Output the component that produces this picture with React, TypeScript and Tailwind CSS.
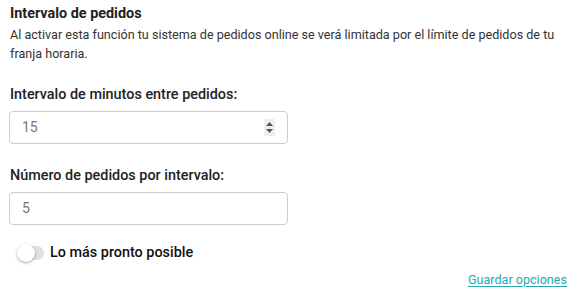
import React from "react";

export default function App() {
  return (
    <div
      className="w-[581px] h-[301px] bg-white text-[#212121] px-[10px] pt-[4px]"
      style={{ fontFamily: "Roboto, 'Liberation Sans', sans-serif" }}
    >
      <h2 className="text-[14.4px] font-bold leading-[20px]">Intervalo de pedidos</h2>
      <p className="text-[12.6px] leading-[19px] text-[#333] mt-[1px] w-[560px]">
        Al activar esta función tu sistema de pedidos online se verá limitada por el límite de pedidos de tu franja horaria.
      </p>
      <div className="mt-[22px]">
        <label className="block text-[14.4px] font-medium leading-[20px] text-[#222]">
          Intervalo de minutos entre pedidos:
        </label>
        <div className="mt-[6px] w-[279px] h-[33px] -ml-[1px] border border-[#ccc] rounded-[4px] flex items-center pl-[12px] pr-[12px]">
          <span className="text-[14px] text-[#777] flex-1">15</span>
          <div className="w-[11px] h-[17px] bg-[#efefef] flex flex-col items-center justify-center gap-[3px]">
            <svg width="7" height="4" viewBox="0 0 7 4"><path d="M0 4 L3.5 0 L7 4 Z" fill="#555" /></svg>
            <svg width="7" height="4" viewBox="0 0 7 4"><path d="M0 0 L3.5 4 L7 0 Z" fill="#555" /></svg>
          </div>
        </div>
      </div>
      <div className="mt-[22px]">
        <label className="block text-[14.4px] font-medium leading-[20px] text-[#222]">
          Número de pedidos por intervalo:
        </label>
        <div className="mt-[6px] w-[279px] h-[33px] -ml-[1px] border border-[#ccc] rounded-[4px] flex items-center pl-[12px]">
          <span className="text-[14px] text-[#777]">5</span>
        </div>
      </div>
      <div className="mt-[18px] h-[20px] flex items-center pl-[8px]">
        <div className="relative w-[26px] h-[14px] rounded-full bg-[#e0e0e0]">
          <div className="absolute -left-[1px] -top-[2px] w-[18px] h-[18px] rounded-full bg-white shadow-[0_1px_3px_rgba(0,0,0,0.35)]" />
        </div>
        <span className="ml-[6px] text-[14.4px] font-medium text-[#111]">Lo más pronto posible</span>
      </div>
      <div className="flex justify-end pr-[4px] mt-[7px]">
        <a className="text-[12.6px] leading-[19px] text-[#26a9b3] underline underline-offset-2">Guardar opciones</a>
      </div>
    </div>
  );
}
